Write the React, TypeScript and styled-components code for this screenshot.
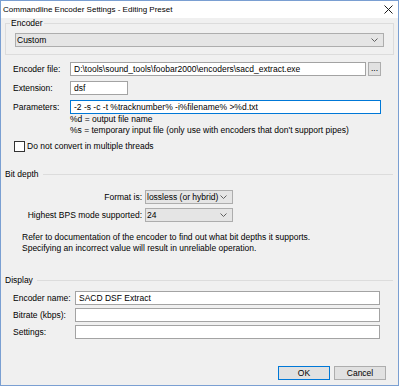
import styled, { createGlobalStyle } from 'styled-components';

const GlobalStyle = createGlobalStyle`
  html, body {
    margin: 0;
    padding: 0;
    background: #ffffff;
  }
  body {
    font-family: 'Liberation Sans', Arial, sans-serif;
    font-size: 8.5px;
    color: #000000;
  }
  * {
    box-sizing: border-box;
  }
`;

const Window = styled.div`
  width: 399px;
  height: 386px;
  border: 1px solid #7a9fd2;
  background-color: #f0f0f0;
  display: flex;
  flex-direction: column;
`;

const TitleBar = styled.div`
  height: 17px;
  flex-shrink: 0;
  background-color: #ffffff;
  display: flex;
  align-items: center;
  justify-content: space-between;
  padding: 0 5px 0 2px;
`;

const Title = styled.span`
  font-size: 8px;
  color: #000000;
`;

const CloseIcon = () => (
  <svg width="9" height="9" viewBox="0 0 9 9">
    <path d="M0.5 0.5 L8.5 8.5 M8.5 0.5 L0.5 8.5" stroke="#1a1a1a" strokeWidth="1" />
  </svg>
);

const GroupBox = styled.fieldset`
  margin: 0 4px;
  padding: 4px 9px 7px;
  border: 1px solid #dcdcdc;
  min-width: 0;
`;

const Legend = styled.legend`
  margin-left: -5px;
  padding: 0 1px;
  line-height: 11px;
  color: #000000;
`;

const Chevron = () => (
  <svg width="7" height="4" viewBox="0 0 7 4">
    <path d="M0.5 0.5 L3.5 3.5 L6.5 0.5" stroke="#606060" strokeWidth="1" fill="none" />
  </svg>
);

const Combo = styled.div<{ width?: number }>`
  width: ${({ width }) => (width ? `${width}px` : '100%')};
  height: 14px;
  border: 1px solid #adadad;
  background-color: #e5e5e5;
  display: flex;
  align-items: center;
  justify-content: space-between;
  padding: 0 5px 0 1px;
  line-height: 12px;
  white-space: nowrap;
`;

const FormGrid = styled.div<{ labelWidth: number }>`
  display: grid;
  grid-template-columns: ${({ labelWidth }) => labelWidth}px 1fr;
  row-gap: 5px;
  align-items: start;
  padding: 0 17px 0 12px;
`;

const FileGrid = styled(FormGrid)`
  margin-top: 7px;
`;

const DisplayGrid = styled(FormGrid)`
  row-gap: 3px;
  margin-top: 5px;
  padding-right: 18px;
`;

const Label = styled.span`
  line-height: 14px;
  white-space: nowrap;
`;

const TextInput = styled.div<{ width?: number; focused?: boolean }>`
  width: ${({ width }) => (width ? `${width}px` : '100%')};
  height: 14px;
  border: 1px solid ${({ focused }) => (focused ? '#0078d7' : '#a3a3a3')};
  background-color: #ffffff;
  padding: 0 3px;
  line-height: 12px;
  white-space: nowrap;
  overflow: hidden;
`;

const InputWithButton = styled.div`
  display: flex;
  gap: 2px;
`;

const BrowseButton = styled.div`
  width: 13px;
  height: 14px;
  flex-shrink: 0;
  border: 1px solid #adadad;
  background-color: #e1e1e1;
  text-align: center;
  line-height: 11px;
`;

const FieldStack = styled.div`
  display: flex;
  flex-direction: column;
`;

const Hint = styled.div`
  line-height: 11px;
  white-space: nowrap;
  &:first-of-type {
    margin-top: 1px;
  }
`;

const CheckRow = styled.label`
  display: flex;
  align-items: center;
  gap: 2px;
  margin: 5px 0 0 13px;
  line-height: 11px;
`;

const CheckBox = styled.span`
  width: 11px;
  height: 11px;
  border: 1px solid #333333;
  background-color: #ffffff;
`;

const SectionHeader = styled.div<{ gapTop: number }>`
  display: flex;
  align-items: center;
  gap: 4px;
  margin: ${({ gapTop }) => gapTop}px 5px 0 4px;
  line-height: 11px;

  &::after {
    content: '';
    flex: 1;
    height: 1px;
    background-color: #dcdcdc;
  }
`;

const DepthGrid = styled.div`
  display: grid;
  grid-template-columns: 141px 88px;
  column-gap: 3px;
  row-gap: 4px;
  align-items: center;
  margin-top: 10px;
`;

const RightLabel = styled.span`
  text-align: right;
  white-space: nowrap;
`;

const Note = styled.div`
  margin: 10px 0 0 21px;
  line-height: 11px;
`;

const ButtonRow = styled.div`
  margin-top: auto;
  display: flex;
  justify-content: flex-end;
  gap: 4px;
  padding: 0 12px 5px 0;
`;

const DialogButton = styled.div<{ primary?: boolean }>`
  width: 52px;
  height: 14px;
  border: 1px solid ${({ primary }) => (primary ? '#0078d7' : '#adadad')};
  background-color: #e1e1e1;
  text-align: center;
  line-height: 12px;
`;

const App = () => {
  return (
    <>
      <GlobalStyle />
      <Window>
        <TitleBar>
          <Title>Commandline Encoder Settings - Editing Preset</Title>
          <CloseIcon />
        </TitleBar>

        <GroupBox>
          <Legend>Encoder</Legend>
          <Combo>
            <span>Custom</span>
            <Chevron />
          </Combo>
        </GroupBox>

        <FileGrid labelWidth={57}>
          <Label>Encoder file:</Label>
          <InputWithButton>
            <TextInput>D:\tools\sound_tools\foobar2000\encoders\sacd_extract.exe</TextInput>
            <BrowseButton>...</BrowseButton>
          </InputWithButton>
          <Label>Extension:</Label>
          <TextInput width={58}>dsf</TextInput>
          <Label>Parameters:</Label>
          <FieldStack>
            <TextInput focused>-2 -s -c -t %tracknumber% -i%filename% &gt;%d.txt</TextInput>
            <Hint>%d = output file name</Hint>
            <Hint>%s = temporary input file (only use with encoders that don't support pipes)</Hint>
          </FieldStack>
        </FileGrid>

        <CheckRow>
          <CheckBox />
          Do not convert in multiple threads
        </CheckRow>

        <SectionHeader gapTop={17}>Bit depth</SectionHeader>
        <DepthGrid>
          <RightLabel>Format is:</RightLabel>
          <Combo width={88}>
            <span>lossless (or hybrid)</span>
            <Chevron />
          </Combo>
          <RightLabel>Highest BPS mode supported:</RightLabel>
          <Combo width={88}>
            <span>24</span>
            <Chevron />
          </Combo>
        </DepthGrid>
        <Note>
          Refer to documentation of the encoder to find out what bit depths it supports.
          <br />
          Specifying an incorrect value will result in unreliable operation.
        </Note>

        <SectionHeader gapTop={21}>Display</SectionHeader>
        <DisplayGrid labelWidth={62}>
          <Label>Encoder name:</Label>
          <TextInput>SACD DSF Extract</TextInput>
          <Label>Bitrate (kbps):</Label>
          <TextInput />
          <Label>Settings:</Label>
          <TextInput />
        </DisplayGrid>

        <ButtonRow>
          <DialogButton primary>OK</DialogButton>
          <DialogButton>Cancel</DialogButton>
        </ButtonRow>
      </Window>
    </>
  );
};

export default App;
